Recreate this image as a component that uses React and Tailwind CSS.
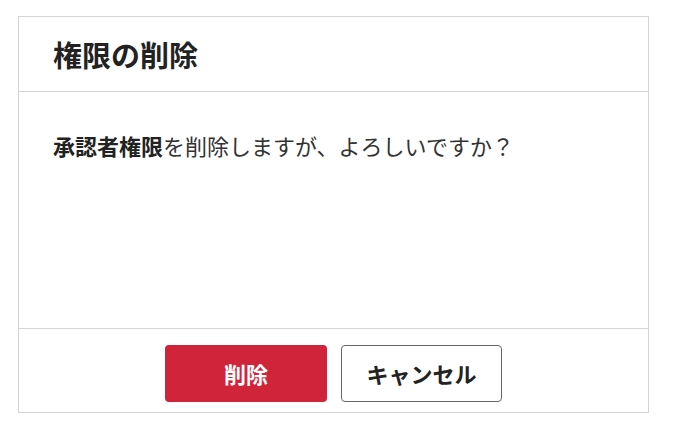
import React from 'react';

function App() {
  return (
    <div className="min-h-screen bg-white pt-4 pl-[18px] pr-[26px] font-['Noto_Sans_CJK_JP',sans-serif] text-[#333]">
      <div className="w-[631px] border border-[#d4d4d4] bg-white">
        {/* Header */}
        <div className="h-[75px] border-b border-[#d4d4d4] px-[34px] flex items-center">
          <h2 className="text-[29px] leading-none font-bold text-[#222]">権限の削除</h2>
        </div>

        {/* Body */}
        <div className="h-[236px] px-[34px] pt-[42px]">
          <p className="text-[22px] leading-none">
            <span className="font-bold text-[#222]">承認者権限</span>を削除しますが、よろしいですか？
          </p>
        </div>

        {/* Footer */}
        <div className="h-[84px] border-t border-[#d4d4d4] flex justify-center gap-[14px] pt-[16px]">
          <button className="w-[162px] h-[57px] rounded-[4px] bg-[#d0243a] text-white text-[22px] font-bold">
            削除
          </button>
          <button className="w-[161px] h-[57px] rounded-[4px] border border-[#666] bg-white text-[#222] text-[22px] font-bold">
            キャンセル
          </button>
        </div>
      </div>
    </div>
  );
}

export default App;
